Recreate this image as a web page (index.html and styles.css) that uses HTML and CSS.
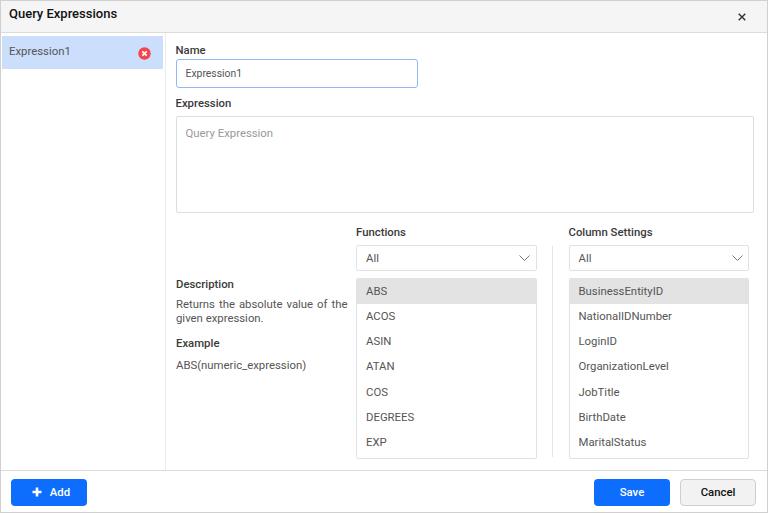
FILE: index.html
```html
<!DOCTYPE html>
<html lang="en">
<head>
<meta charset="utf-8">
<title>Query Expressions</title>
<link rel="stylesheet" href="styles.css">
</head>
<body>
<div class="dialog">
  <header class="head">
    <h1 class="title">Query Expressions</h1>
    <svg class="close" width="8" height="8" viewBox="0 0 8 8"><path d="M.7.7l6.6 6.6M7.3.7L.7 7.3" stroke="#333" stroke-width="1.4" fill="none"/></svg>
  </header>
  <div class="body">
    <aside class="side">
      <div class="side-item">
        <span>Expression1</span>
        <svg class="del" width="13" height="13" viewBox="0 0 13 13"><circle cx="6.5" cy="6.5" r="6.2" fill="#f5444e"/><path d="M4.3 4.3l4.4 4.4M8.7 4.3l-4.4 4.4" stroke="#fff" stroke-width="1.7" fill="none"/></svg>
      </div>
    </aside>
    <main class="main">
      <label class="label name-label">Name</label>
      <div class="input">Expression1</div>
      <label class="label expr-label">Expression</label>
      <div class="textarea">Query Expression</div>
      <div class="lower">
        <section class="info">
          <div class="label">Description</div>
          <p class="desc">Returns the absolute value of the given expression.</p>
          <div class="label ex-label">Example</div>
          <p class="example">ABS(numeric_expression)</p>
        </section>
        <section class="col">
          <div class="label col-label">Functions</div>
          <div class="select"><span>All</span><svg width="11" height="6" viewBox="0 0 11 6"><path d="M.5.5l5 5 5-5" stroke="#777" stroke-width="1" fill="none"/></svg></div>
          <ul class="list">
            <li class="sel">ABS</li><li>ACOS</li><li>ASIN</li><li>ATAN</li><li>COS</li><li>DEGREES</li><li>EXP</li>
          </ul>
        </section>
        <div class="divider"></div>
        <section class="col">
          <div class="label col-label">Column Settings</div>
          <div class="select"><span>All</span><svg width="11" height="6" viewBox="0 0 11 6"><path d="M.5.5l5 5 5-5" stroke="#777" stroke-width="1" fill="none"/></svg></div>
          <ul class="list">
            <li class="sel">BusinessEntityID</li><li>NationalIDNumber</li><li>LoginID</li><li>OrganizationLevel</li><li>JobTitle</li><li>BirthDate</li><li>MaritalStatus</li>
          </ul>
        </section>
      </div>
    </main>
  </div>
  <footer class="foot">
    <button class="btn primary add"><svg width="10" height="10" viewBox="0 0 10 10"><path d="M5 .5v9M.5 5h9" stroke="#fff" stroke-width="2.6" fill="none"/></svg><span>Add</span></button>
    <div class="actions">
      <button class="btn primary save">Save</button>
      <button class="btn cancel">Cancel</button>
    </div>
  </footer>
</div>
</body>
</html>
```
FILE: styles.css
```css
* { box-sizing: border-box; }
html, body { margin: 0; padding: 0; background: #fff; }
body { width: 768px; height: 513px; overflow: hidden; font-family: Roboto, "Liberation Sans", sans-serif; color: #555; font-size: 11.35px; }
.dialog { width: 768px; height: 513px; border: 1px solid #d0d0d0; display: flex; flex-direction: column; }
.head { height: 32px; flex: none; background: #f5f5f5; border-bottom: 1px solid #dcdcdc; display: flex; align-items: center; justify-content: space-between; padding: 0 21px 6px 8px; }
.title { margin: 0; font-size: 13px; font-weight: 500; color: #111; }
.close { margin-top: 7px; }
.body { flex: 1; display: flex; min-height: 0; }
.side { width: 165px; flex: none; border-right: 1px solid #ececec; padding: 3px 2px 0 1px; }
.side-item { height: 32.5px; background: #cbdefc; display: flex; align-items: center; justify-content: space-between; padding: 0 12px 0 7px; color: #555; }
.side-item span { position: relative; top: -1px; }
.del { margin-top: 1.5px; }
.main { flex: 1; padding: 10px 13px 0 9.5px; display: flex; flex-direction: column; }
.label { font-size: 11.35px; font-weight: 500; color: #3a3a3a; line-height: 14px; }
.input { width: 242.5px; height: 29px; margin-top: 2px; border: 1px solid #8fb8f8; border-radius: 3px; padding: 0 9px; display: flex; align-items: center; color: #555; font-size: 10.4px; }
.expr-label { margin-top: 8px; }
.textarea { height: 96.5px; margin-top: 6px; border: 1px solid #dedede; border-radius: 2px; padding: 9px; color: #999; font-size: 11.35px; line-height: 14px; }
.lower { display: flex; margin-top: 12.5px; }
.info { width: 171.5px; margin: 0 8.5px 0 .5px; padding-top: 52px; }
.desc { margin: 6px 0 0; font-size: 11.35px; line-height: 14px; text-align: justify; color: #555; }
.ex-label { margin-top: 11px; }
.example { margin: 8px 0 0; font-size: 11.35px; line-height: 14px; color: #555; }
.col { width: 180.5px; flex: none; }
.col-label { margin-bottom: 6px; }
.select { height: 26px; border: 1px solid #e2e2e2; border-radius: 2px; display: flex; align-items: center; justify-content: space-between; padding: 0 5.5px 0 9px; color: #555; }
.list { list-style: none; margin: 7px 0 0; padding: 0; height: 181px; border: 1px solid #e2e2e2; border-radius: 2px; overflow: hidden; }
.list li { height: 25.17px; line-height: 25px; padding: 0 9px; color: #555; }
.list li.sel { background: #e3e3e3; }
.divider { width: 1px; margin: 21px 15.5px 0 15.5px; height: 211px; background: #e6e6e6; flex: none; }
.foot { height: 42px; flex: none; border-top: 1px solid #dcdcdc; display: flex; align-items: center; justify-content: space-between; padding: 1px 11px 0 10px; }
.actions { display: flex; gap: 10px; }
.btn { height: 27px; width: 76px; border-radius: 4px; font-family: inherit; font-size: 11.35px; font-weight: 500; border: 1px solid transparent; padding: 0; display: flex; align-items: center; justify-content: center; }
.primary { background: #0d6efd; color: #fff; }
.add { gap: 8px; padding-left: 4px; }
.cancel { background: #f2f2f2; border-color: #cfcfcf; color: #111; }
```
